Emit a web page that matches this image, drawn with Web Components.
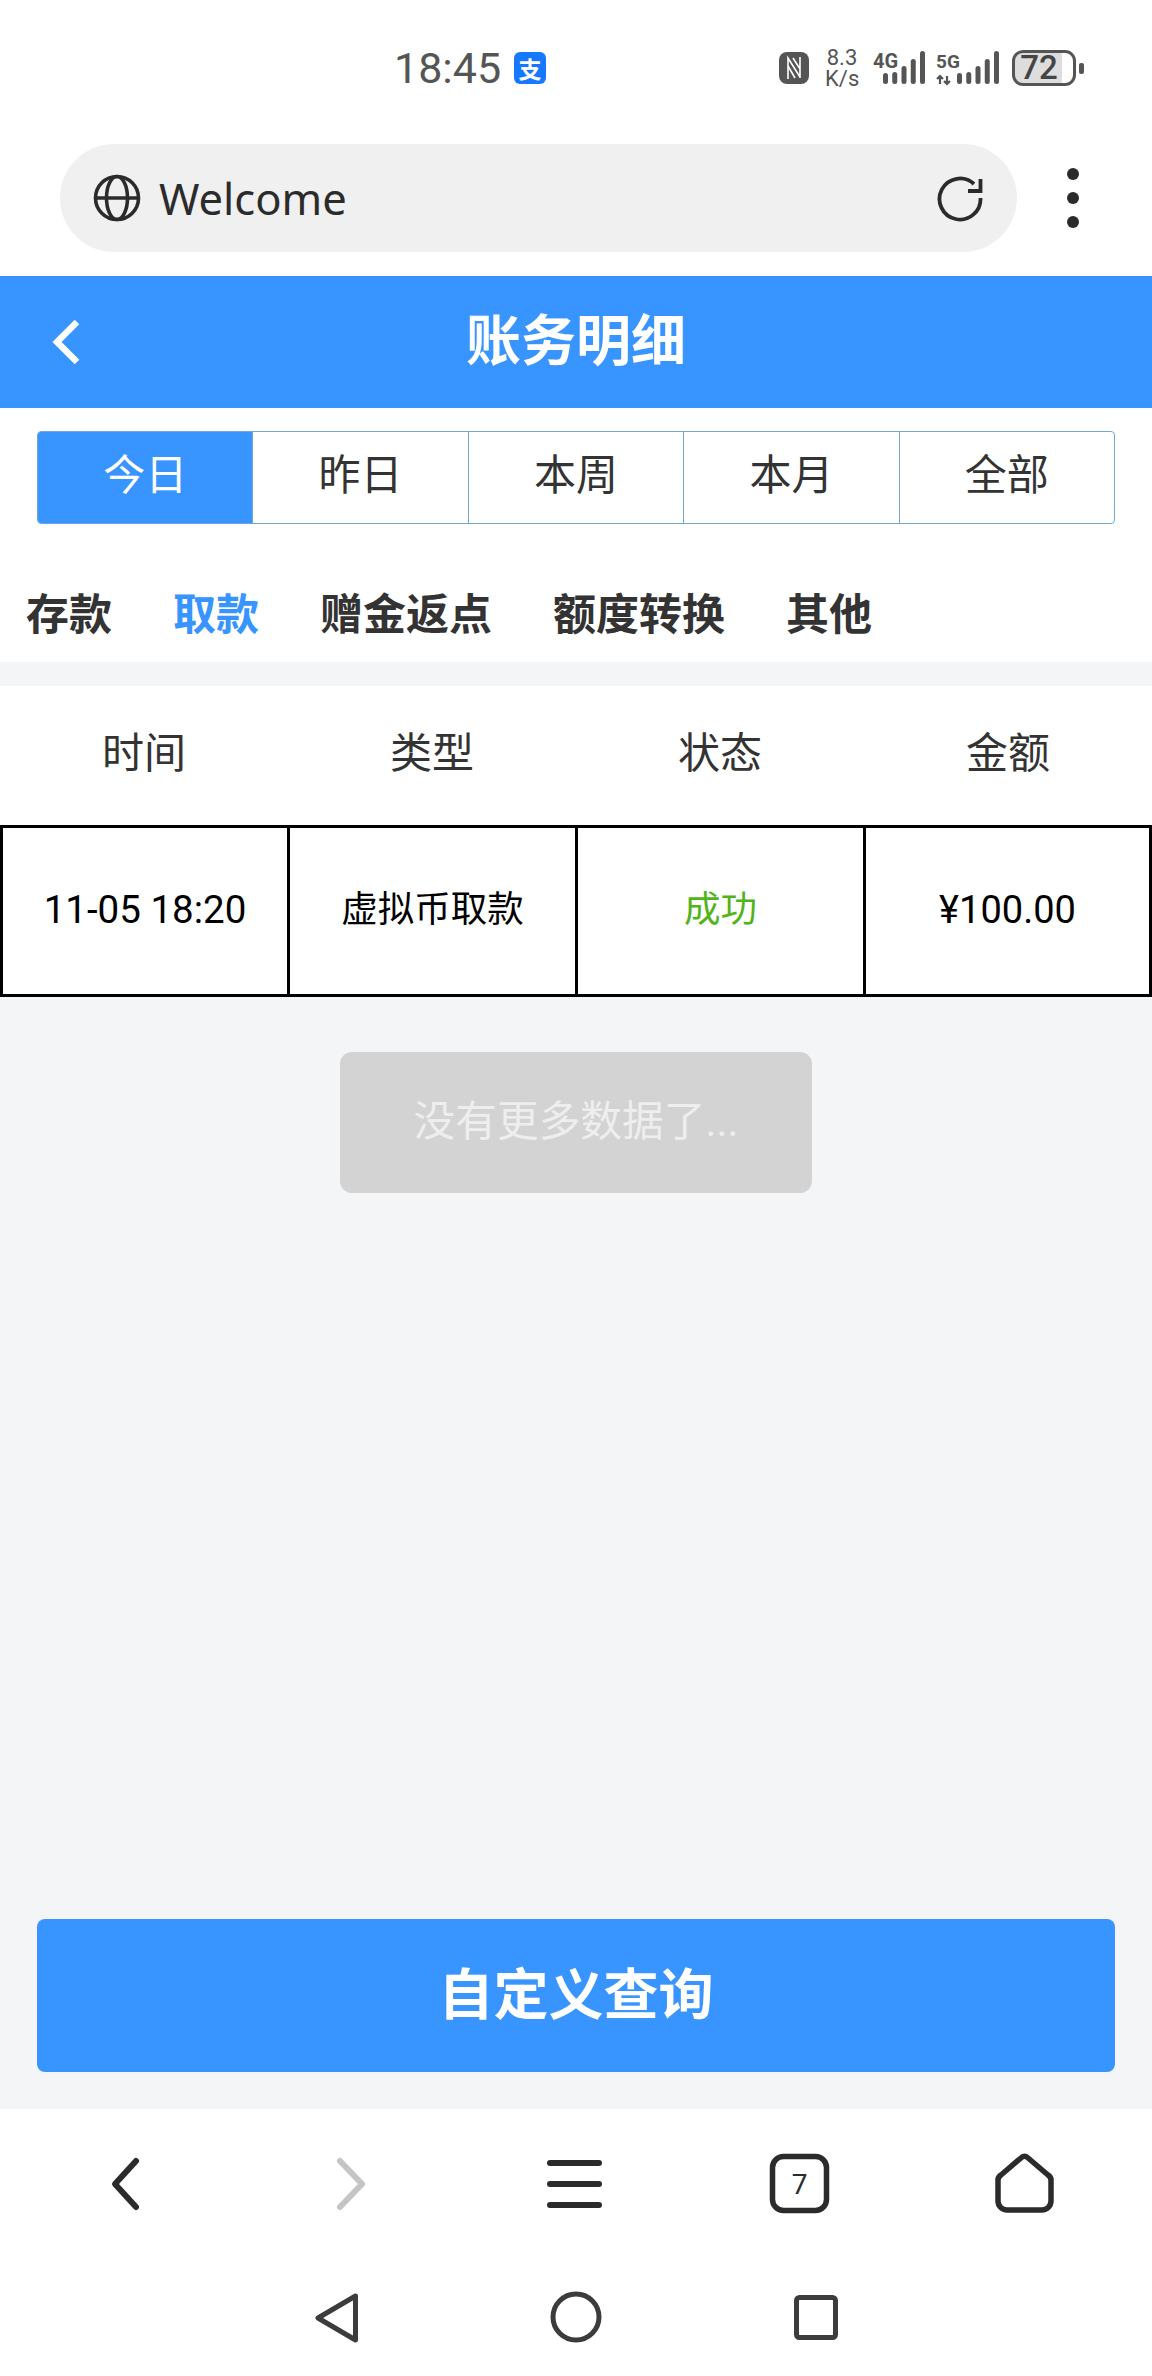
<!DOCTYPE html>
<html lang="zh-CN">
<head>
<meta charset="utf-8">
<title>账务明细</title>
<style>
html, body { margin: 0; padding: 0; }
body {
  width: 1152px;
  height: 2376px;
  overflow: hidden;
  display: flex;
  flex-direction: column;
  background: #f3f5f7;
  font-family: Roboto, "Noto Sans CJK SC", sans-serif;
  color: #333;
}
</style>
</head>
<body>
<status-bar>
  <span slot="time">18:45</span>
  <net-speed slot="icons">8.3<br>K/s</net-speed>
</status-bar>
<browser-bar>Welcome</browser-bar>
<page-header>账务明细</page-header>
<range-tabs>
  <range-tab active>今日</range-tab>
  <range-tab>昨日</range-tab>
  <range-tab>本周</range-tab>
  <range-tab>本月</range-tab>
  <range-tab>全部</range-tab>
</range-tabs>
<type-nav>
  <type-link>存款</type-link>
  <type-link active>取款</type-link>
  <type-link>赠金返点</type-link>
  <type-link>额度转换</type-link>
  <type-link>其他</type-link>
</type-nav>
<record-head>
  <span>时间</span><span>类型</span><span>状态</span><span>金额</span>
</record-head>
<record-row>
  <record-cell>11-05 18:20</record-cell>
  <record-cell kind="text">虚拟币取款</record-cell>
  <record-cell kind="text" status="ok">成功</record-cell>
  <record-cell>¥100.00</record-cell>
</record-row>
<load-more>没有更多数据了...</load-more>
<query-button>自定义查询</query-button>
<browser-toolbar tabs="7"></browser-toolbar>
<system-nav></system-nav>

<script>
const CJK = `Roboto, "Noto Sans CJK SC", sans-serif`;

// small helper so every element below stays a few lines long
function define(name, css, html) {
  customElements.define(name, class extends HTMLElement {
    constructor() {
      super();
      this.attachShadow({ mode: "open" });
    }
    connectedCallback() {
      const body = typeof html === "function" ? html(this) : html;
      this.shadowRoot.innerHTML = `<style>${css}</style>${body}`;
    }
  });
}

const signal = (label, offset, arrows) => {
  const tops = [22, 21, 15, 8, 0];
  const bars = tops.map((top, i) => {
    const x = offset + i * 9.25;
    return `<rect x="${x}" y="${top}" width="5" height="${33 - top}" rx="2.5"/>`;
  }).join("");
  const width = offset + 42;
  const mark = arrows
    ? `<path d="M4 33V25M1 28L4 25L7 28M11 25V33M8 30L11 33L14 30" fill="none" stroke="#555" stroke-width="2.2"/>`
    : "";
  // extra room above and below keeps the label's line box inside the svg
  return `<svg width="${width}" height="40" viewBox="0 -3 ${width} 40" fill="#555">
    <text x="0" y="17" font-family="Roboto" font-weight="700" font-size="${arrows ? 19 : 20}">${label}</text>
    ${mark}${bars}</svg>`;
};

define("net-speed", `
  :host { display: block; font-size: 22px; line-height: 21px; color: #555; text-align: center; width: 34px; white-space: nowrap; }
`, `<slot></slot>`);

define("status-bar", `
  :host { display: flex; align-items: center; height: 136px; padding: 0 68px 0 394px; background: #fff; color: #555; }
  .time { font: 43px/48px Roboto, sans-serif; color: #555; }
  .pay { width: 32px; height: 32px; margin-left: 13px; border-radius: 6px; background: #1677ff; color: #fff;
         display: flex; align-items: center; justify-content: center; font: 700 23px/32px "Noto Sans CJK SC", sans-serif; }
  .icons { margin-left: auto; display: flex; align-items: center; }
  .nfc { margin-right: 16px; }
  .net4 { display: flex; margin: 0 11px 0 14px; }
  .net5 { display: flex; margin-right: 13px; }
  .battery { width: 64px; height: 36px; box-sizing: border-box; border: 3px solid #555; border-radius: 11px;
             background: linear-gradient(90deg, #ddd 0 47px, #fff 47px); font: 500 33px/30px Roboto, sans-serif; color: #444;
             text-align: center; padding-right: 10px; }
  .nub { width: 5px; height: 11px; margin-left: 3px; border-radius: 2px; background: #555; }
`, `
  <span class="time"><slot name="time"></slot></span>
  <span class="pay">支</span>
  <div class="icons">
    <svg class="nfc" width="30" height="32" viewBox="0 0 30 32">
      <rect width="30" height="32" rx="8" fill="#555"/>
      <path d="M9 27V6L21 25M9 14L16 26M21 5V26M14 6L21 17" fill="none" stroke="#fff" stroke-width="1.6"/>
    </svg>
    <slot name="icons"></slot>
    <span class="net4">${signal("4G", 10, false)}</span>
    <span class="net5">${signal("5G", 21, true)}</span>
    <div class="battery">72</div>
    <div class="nub"></div>
  </div>
`);

define("browser-bar", `
  :host { display: flex; align-items: center; height: 140px; padding: 0 0 16px 60px; box-sizing: border-box; background: #fff; }
  .pill { display: flex; align-items: center; width: 957px; height: 108px; box-sizing: border-box; padding: 0 33px 0 33px;
          border-radius: 54px; background: #f0f0f0; color: #2b2b2b; font: 43.5px/60px "Noto Sans", sans-serif; }
  .pill svg:first-child { margin-right: 18px; }
  .pill span { flex: 1; }
  .menu { display: flex; flex-direction: column; gap: 12px; margin-left: 50px; }
  .menu i { display: block; width: 12px; height: 12px; border-radius: 50%; background: #2b2b2b; }
`, `
  <div class="pill">
    <svg width="48" height="48" viewBox="0 0 48 48" fill="none" stroke="#2b2b2b" stroke-width="3.6">
      <circle cx="24" cy="24" r="21.5"/><ellipse cx="24" cy="24" rx="10.5" ry="21.5"/><path d="M3 24H45"/>
    </svg>
    <span><slot></slot></span>
    <svg width="48" height="48" viewBox="0 0 48 48" fill="none" stroke="#2b2b2b" stroke-width="3.8">
      <path d="M38 10A20.5 20.5 0 1 0 44.5 24"/><path d="M44.5 5V17H32"/>
    </svg>
  </div>
  <div class="menu"><i></i><i></i><i></i></div>
`);

define("page-header", `
  :host { display: flex; align-items: center; justify-content: center; position: relative; height: 132px; box-sizing: border-box;
          padding-bottom: 3px; background: #3894ff; color: #fff; font: 700 55px/64px ${CJK}; }
  svg { position: absolute; left: 48px; top: 42px; }
`, `
  <svg width="36" height="48" viewBox="0 0 36 48" fill="none" stroke="#fff" stroke-width="6.5"><path d="M29 4L9 24L29 44"/></svg>
  <slot></slot>
`);

define("range-tabs", `
  :host { display: block; padding: 23px 37px 0; background: #fff; }
  .box { display: flex; height: 93px; box-sizing: border-box; border-radius: 4px; border: 1px solid #6fa8d2; overflow: hidden; }
`, `<div class="box"><slot></slot></div>`);

define("range-tab", `
  :host { flex: 1; display: flex; align-items: center; justify-content: center; box-sizing: border-box; padding-bottom: 3px;
          font: 42px/50px ${CJK}; color: #333; border-left: 1px solid #6fa8d2; }
  :host(:first-child) { border-left: 0; }
  :host([active]) { background: #3894ff; color: #fff; border-left: 0; }
`, `<slot></slot>`);

define("type-nav", `
  :host { display: flex; gap: 61px; height: 138px; box-sizing: border-box; padding: 67px 0 0 26px; background: #fff; }
`, `<slot></slot>`);

define("type-link", `
  :host { display: block; font: 700 43px/48px ${CJK}; color: #333; }
  :host([active]) { color: #3894ff; }
`, `<slot></slot>`);

define("record-head", `
  :host { display: grid; grid-template-columns: repeat(4, 288px); height: 139px; box-sizing: border-box; padding-bottom: 3px;
          margin-top: 24px; background: #fff; }
  ::slotted(span) { display: flex; align-items: center; justify-content: center; font: 42px/50px ${CJK}; color: #333; }
`, `<slot></slot>`);

define("record-row", `
  :host { display: grid; grid-template-columns: 290px 288px 288px 286px; height: 172px; box-sizing: border-box;
          border-top: 3px solid #000; border-bottom: 3px solid #000; background: #fff; }
`, `<slot></slot>`);

define("record-cell", `
  :host { display: flex; align-items: center; justify-content: center; box-sizing: border-box; padding-bottom: 2px;
          font: 38px/46px ${CJK}; color: #000; border-right: 3px solid #000; }
  :host(:first-child) { border-left: 3px solid #000; font-size: 38.5px; }
  :host([kind="text"]) { font-size: 36.5px; }
  :host([status="ok"]) { color: #52b41a; }
`, `<slot></slot>`);

define("load-more", `
  :host { display: flex; align-items: center; justify-content: center; width: 472px; height: 141px; margin: 55px auto 0;
          box-sizing: border-box; padding-bottom: 2px; border-radius: 12px; background: #d3d3d3; color: #eee; font: 41.7px/50px ${CJK}; }
`, `<slot></slot>`);

define("query-button", `
  :host { display: flex; align-items: center; justify-content: center; height: 153px; margin: auto 37px 37px; box-sizing: border-box;
          padding-bottom: 2px; border-radius: 8px; background: #3894ff; color: #fff; font: 700 55px/64px ${CJK}; }
`, `<slot></slot>`);

define("browser-toolbar", `
  :host { display: grid; grid-template-columns: repeat(5, 224px); height: 150px; padding-left: 15px; background: #fff; align-items: center; justify-items: center; }
  svg { display: block; }
`, (el) => `
  <svg width="64" height="64" viewBox="0 0 64 64" fill="none" stroke="#2b2b2b" stroke-width="6" stroke-linecap="round" stroke-linejoin="round"><path d="M41 9L20 32L41 55"/></svg>
  <svg width="64" height="64" viewBox="0 0 64 64" fill="none" stroke="#c4c4c4" stroke-width="6" stroke-linecap="round" stroke-linejoin="round"><path d="M21 9L43 32L21 55"/></svg>
  <svg width="64" height="64" viewBox="0 0 64 64" fill="none" stroke="#2b2b2b" stroke-width="6" stroke-linecap="round"><path d="M7 11H56M7 32H56M7 53H56"/></svg>
  <svg width="64" height="64" viewBox="0 0 64 64" fill="none" stroke="#2b2b2b" stroke-width="5.5">
    <rect x="5.5" y="4.5" width="54" height="54" rx="11"/>
    <text x="32.5" y="42" text-anchor="middle" fill="#2b2b2b" stroke="none" font-family="Roboto" font-size="28">${el.getAttribute("tabs")}</text>
  </svg>
  <svg width="64" height="64" viewBox="0 0 64 64" fill="none" stroke="#2b2b2b" stroke-width="5.5" stroke-linejoin="round">
    <path d="M30.5 5.5a4.5 4.5 0 0 1 6 0L57 23a6 6 0 0 1 3 5.5V49a9 9 0 0 1-9 9H16a9 9 0 0 1-9-9V28.5a6 6 0 0 1 3-5.5Z"/>
  </svg>
`);

define("system-nav", `
  :host { display: flex; justify-content: center; height: 117px; background: #fff; padding-top: 31px; box-sizing: border-box; }
  .slot { width: 240px; display: flex; justify-content: center; }
`, `
  <div class="slot"><svg width="56" height="56" viewBox="0 0 56 56" fill="none" stroke="#3c3c3c" stroke-width="5" stroke-linejoin="round"><path d="M47.5 6L10 28L47.5 50Z"/></svg></div>
  <div class="slot"><svg width="56" height="56" viewBox="0 0 56 56" fill="none" stroke="#3c3c3c" stroke-width="5"><circle cx="28" cy="27" r="23"/></svg></div>
  <div class="slot"><svg width="56" height="56" viewBox="0 0 56 56" fill="none" stroke="#3c3c3c" stroke-width="5"><rect x="8.5" y="7.5" width="39" height="40" rx="3"/></svg></div>
`);
</script>
</body>
</html>
